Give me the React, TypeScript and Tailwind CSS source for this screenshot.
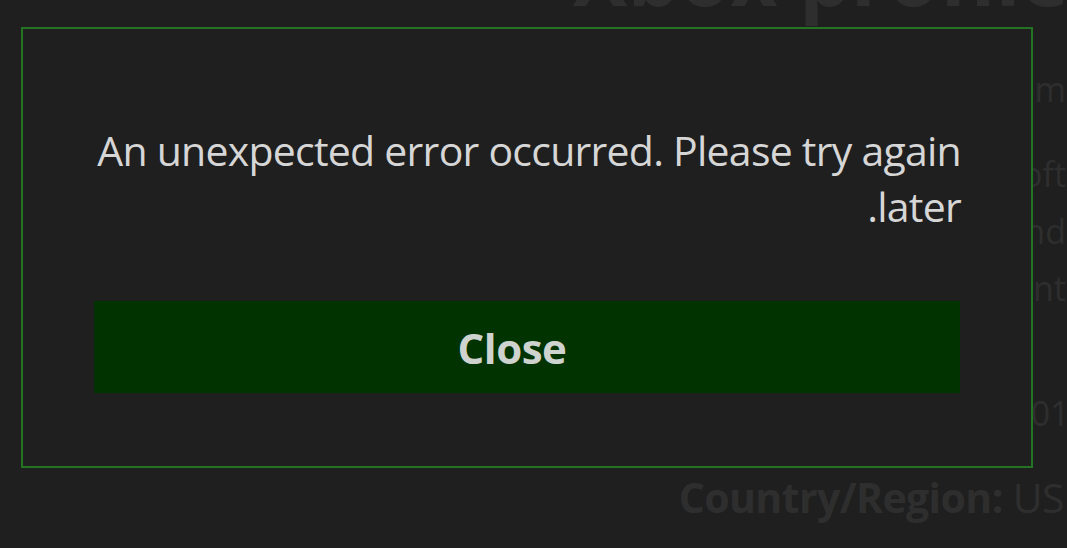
export default function App() {
  return (
    <div
      className="relative h-[548px] w-[1067px] overflow-hidden bg-[#1f1f1f]"
      style={{ fontFamily: '"Open Sans", "Noto Sans", sans-serif' }}
    >
      {/* page behind the dialog */}
      <div className="flex flex-col items-end text-[#2e2e2e]">
        <h1 className="mt-[-66px] mr-[-2px] whitespace-nowrap text-[82px] font-bold leading-[80px]">Xbox profile</h1>
        <div className="mt-[47px] flex flex-col items-end text-[34px] leading-[57px]">
          <div className="mr-[1px]">Name: Tom</div>
          <div className="mt-[28px] mr-[1px]">Account: Microsoft</div>
          <div className="mr-[1px]">Brand</div>
          <div className="mr-[1px]">Account</div>
          <div className="mt-[68px] mr-[-22px]">Joined: 2014</div>
        </div>
        <div className="mt-[27px] mr-[3px] whitespace-nowrap text-[41px] leading-[56px] tracking-[-0.6px]">
          <span className="font-bold">Country/Region:</span> US
        </div>
      </div>

      {/* dialog */}
      <div className="absolute left-[21px] top-[27px] flex h-[441px] w-[1012px] flex-col border-2 border-[#247224] bg-[#1f1f1f] pl-[71px] pr-[70px] pt-[93px]">
        <p dir="rtl" className="text-right text-[41px] leading-[56px] tracking-[-0.75px] text-[#d6d6d6]">
          An unexpected error occurred. Please try again later.
        </p>
        <button
          type="button"
          className="mt-[67px] flex h-[92px] w-[866px] items-center justify-center bg-[#003300] pr-[30px] text-[42px] font-bold tracking-[-0.5px] text-[#cfd3cf]"
        >
          Close
        </button>
      </div>
    </div>
  );
}
